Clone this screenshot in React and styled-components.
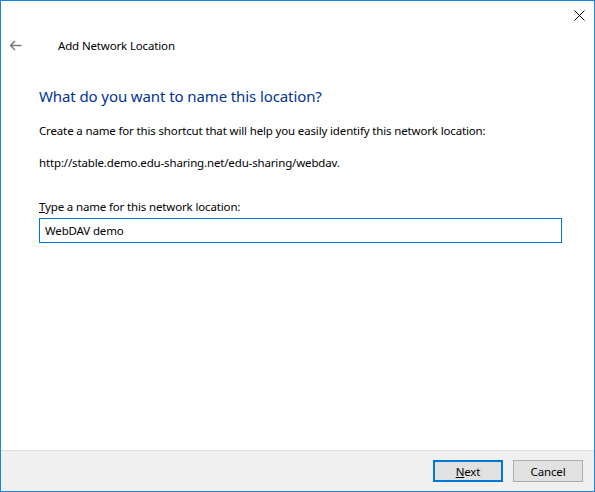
import React, { useState } from "react";
import styled, { createGlobalStyle } from "styled-components";

const GlobalStyle = createGlobalStyle`
  html, body {
    margin: 0;
    padding: 0;
    background: #ffffff;
  }
  * {
    box-sizing: border-box;
  }
`;

const Window = styled.div`
  width: 595px;
  height: 492px;
  border: 1px solid #1883d7;
  background: #ffffff;
  display: flex;
  flex-direction: column;
  font-family: "Noto Sans", "Open Sans", sans-serif;
  font-size: 11.5px;
  letter-spacing: -0.15px;
  color: #000000;
`;

const TitleBar = styled.div`
  height: 29px;
  display: flex;
  justify-content: flex-end;
  align-items: flex-start;
`;

const CloseButton = styled.div`
  width: 30px;
  height: 29px;
  display: flex;
  align-items: center;
  justify-content: center;
`;

const Header = styled.div`
  height: 30px;
  display: flex;
  align-items: center;
`;

const BackButton = styled.div`
  width: 57px;
  padding-left: 8px;
  display: flex;
  align-items: center;
`;

const HeaderTitle = styled.div`
  color: #000000;
`;

const Content = styled.div`
  flex: 1;
  padding: 26px 32px 0 38px;
  display: flex;
  flex-direction: column;
`;

const Heading = styled.h1`
  margin: 0;
  font-size: 15px;
  letter-spacing: -0.1px;
  font-weight: 400;
  color: #003399;
  line-height: 20px;
`;

const Text = styled.p`
  margin: ${(p) => p.$top}px 0 0 0;
  line-height: 16px;
`;

const Label = styled.label`
  display: block;
  margin-top: 28px;
  line-height: 16px;
`;

const Underlined = styled.span`
  text-decoration: underline;
`;

const NameInput = styled.input`
  margin-top: 3px;
  width: 523px;
  height: 25px;
  border: 1px solid #0078d7;
  outline: none;
  padding: 0 5px;
  font-family: inherit;
  font-size: 11.5px;
  letter-spacing: -0.15px;
  color: #000000;
`;

const Footer = styled.div`
  height: 41px;
  border-top: 1px solid #dfdfdf;
  background: #f0f0f0;
  display: flex;
  align-items: flex-start;
  justify-content: flex-end;
  gap: 10px;
  padding: 9px 11px 0 0;
`;

const Button = styled.button`
  width: 70px;
  height: 22px;
  background: #e1e1e1;
  border: ${(p) => (p.$primary ? "2px solid #0078d7" : "1px solid #adadad")};
  font-family: inherit;
  font-size: 11.5px;
  letter-spacing: -0.15px;
  color: #000000;
  padding: 0;
  display: flex;
  align-items: center;
  justify-content: center;
`;

function App() {
  const [name, setName] = useState("WebDAV demo");

  return (
    <>
      <GlobalStyle />
      <Window>
        <TitleBar>
          <CloseButton>
            <svg width="11" height="11" viewBox="0 0 11 11">
              <path d="M0.5 0.5 L10.5 10.5 M10.5 0.5 L0.5 10.5" stroke="#000" strokeWidth="1" fill="none" />
            </svg>
          </CloseButton>
        </TitleBar>
        <Header>
          <BackButton>
            <svg width="13" height="11" viewBox="0 0 13 11">
              <path d="M12.5 5.5 H1.5 M6 1 L1.5 5.5 L6 10" stroke="#7a7a7a" strokeWidth="1.5" fill="none" />
            </svg>
          </BackButton>
          <HeaderTitle>Add Network Location</HeaderTitle>
        </Header>
        <Content>
          <Heading>What do you want to name this location?</Heading>
          <Text $top={17}>
            Create a name for this shortcut that will help you easily identify this network location:
          </Text>
          <Text $top={16}>http://stable.demo.edu-sharing.net/edu-sharing/webdav.</Text>
          <Label htmlFor="loc-name">
            <Underlined>T</Underlined>ype a name for this network location:
          </Label>
          <NameInput id="loc-name" value={name} onChange={(e) => setName(e.target.value)} />
        </Content>
        <Footer>
          <Button $primary>
            <Underlined>N</Underlined>ext
          </Button>
          <Button>Cancel</Button>
        </Footer>
      </Window>
    </>
  );
}

export default App;
